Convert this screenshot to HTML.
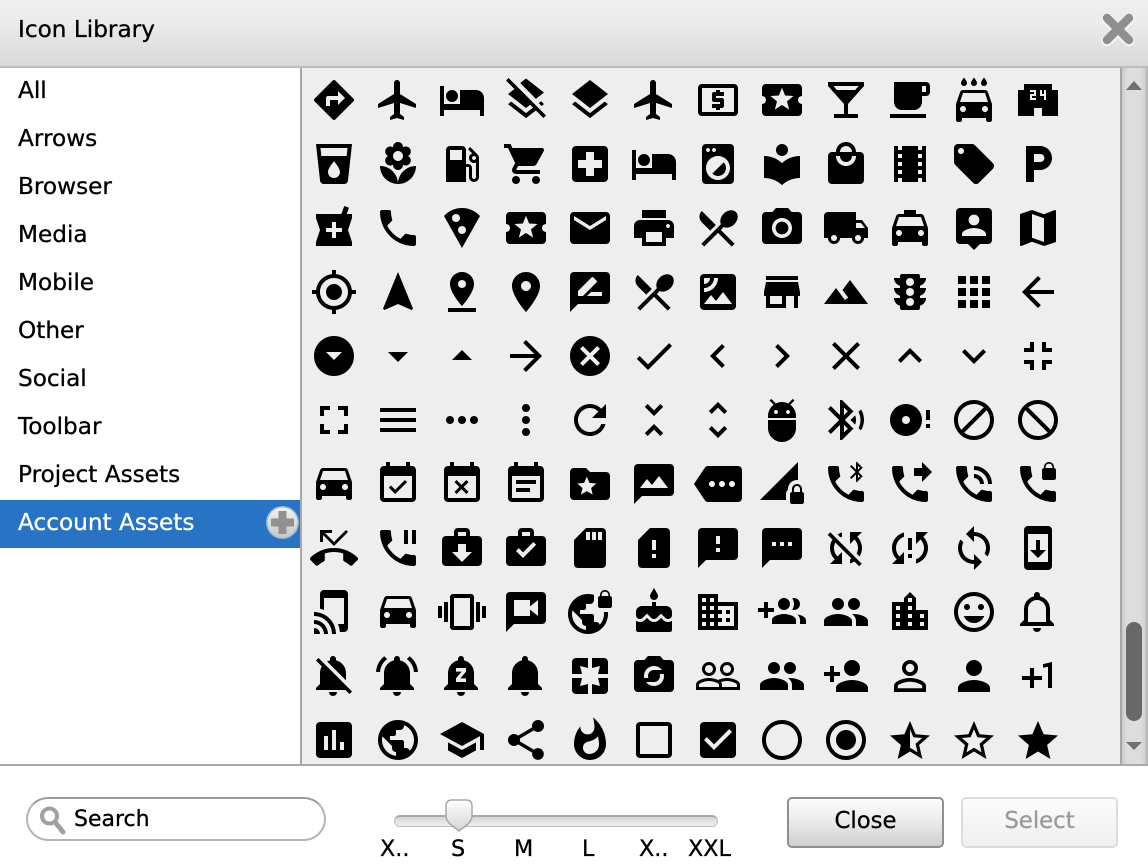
<!DOCTYPE html>
<html lang="en">
<head>
<meta charset="utf-8">
<title>Icon Library</title>
<style>
html,body{margin:0;padding:0;background:#fff}
body{position:relative;width:1148px;height:866px;overflow:hidden;font-family:"DejaVu Sans","Liberation Sans",sans-serif;color:#000}
div,span,button{position:absolute;box-sizing:border-box}
.titlebar{left:0;top:0;width:1148px;height:68px;background:linear-gradient(#eeeeee 0,#ececec 30%,#d9d9d9 100%);border-bottom:2px solid #bcbcbc}
.title{left:18px;top:16px;font-size:23.2px;line-height:28px;white-space:nowrap;-webkit-text-stroke:.3px #000}
.list{left:0;top:68px;width:302px;height:698px;background:#fff;border-right:2px solid #a8a8a8}
.item{left:0;width:300px;height:48px;line-height:48px;padding-left:18px;font-size:23.2px;white-space:nowrap;-webkit-text-stroke:.3px #000}
.sel{background:#2873c4;color:#fff;-webkit-text-stroke:.3px #fff}
.panel{left:302px;top:68px;width:818px;height:696px;background:#eeeeee}
.sbar{left:1120px;top:68px;width:28px;height:696px;background:linear-gradient(90deg,#a6a6a6 0,#a6a6a6 2px,#c8c8c8 2px,#d6d6d6 5px,#dddddd 8px,#dddddd 20px,#d2d2d2 25px,#bcbcbc 26px,#bcbcbc 28px)}
.thumb{left:1126px;top:622px;width:16px;height:99px;border-radius:8px;background:#686868}
.hr{left:0;top:764px;width:1148px;height:2px;background:#a8a8a8}
.search{left:26px;top:797px;width:300px;height:44px;border-radius:22px;border:2px solid #b4b4b4;border-top-color:#9c9c9c;background:#fff}
.stext{left:74px;top:806px;font-size:22px;line-height:28px;-webkit-text-stroke:.3px #000}
.track{left:394px;top:815px;width:324px;height:12px;border-radius:6px;border:1px solid #c0c0c0;border-top:2px solid #a8a8a8;background:linear-gradient(#d4d4d4,#f1f1f1)}
.lab{top:836px;font-size:22.3px;line-height:26px;white-space:nowrap;-webkit-text-stroke:.3px #000}
.btn{top:797px;width:157px;height:51px;border-radius:5px;font-family:inherit;font-size:22.8px;padding:0 0 4px;line-height:44px;text-align:center}
.close{left:787px;border:2px solid #8f8f8f;background:linear-gradient(#fdfdfd 0,#ececec 45%,#cfcfcf 100%);color:#000;-webkit-text-stroke:.3px #000}
.select{left:961px;border:2px solid #dcdcdc;background:linear-gradient(#fcfcfc,#efefef);color:#9a9a9a;-webkit-text-stroke:.3px #9a9a9a}
svg{position:absolute;left:0;top:0}
</style>
</head>
<body>
<div class="titlebar"></div>
<div class="title">Icon Library</div>
<div class="list"></div>
<div class="item" style="top:67px">All</div>
<div class="item" style="top:115px">Arrows</div>
<div class="item" style="top:163px">Browser</div>
<div class="item" style="top:211px">Media</div>
<div class="item" style="top:259px">Mobile</div>
<div class="item" style="top:307px">Other</div>
<div class="item" style="top:355px">Social</div>
<div class="item" style="top:403px">Toolbar</div>
<div class="item" style="top:451px">Project Assets</div>
<div class="item sel" style="top:500px;line-height:46px">Account Assets</div>
<div class="panel"></div>
<div class="sbar"></div>
<div class="thumb"></div>
<div class="hr"></div>
<div class="search"></div>
<div class="stext">Search</div>
<div class="track"></div>
<div class="lab" style="left:380px">X..</div>
<div class="lab" style="left:451px">S</div>
<div class="lab" style="left:514px">M</div>
<div class="lab" style="left:582px">L</div>
<div class="lab" style="left:639px">X..</div>
<div class="lab" style="left:688px">XXL</div>
<button class="btn close">Close</button>
<button class="btn select">Select</button>
<svg width="1148" height="866" viewBox="0 0 1148 866" xmlns="http://www.w3.org/2000/svg">
<defs>
<linearGradient id="pg" x1="0" y1="0" x2="0" y2="1"><stop offset="0" stop-color="#f2f2f2"/><stop offset="1" stop-color="#c8c8c8"/></linearGradient>
<linearGradient id="tg" x1="0" y1="0" x2="0" y2="1"><stop offset="0" stop-color="#ffffff"/><stop offset="1" stop-color="#d4d4d4"/></linearGradient>
<path id="flight" d="M21 16v-2l-8-5V3.5c0-.83-.67-1.5-1.5-1.5S10 2.67 10 3.5V9l-8 5v2l8-2.5V19l-2 1.5V22l3.5-1 3.5 1v-1.5L13 19v-5.5l8 2.5z"/>
<path id="hotel" d="M7 13c1.66 0 3-1.34 3-3S8.66 7 7 7s-3 1.34-3 3 1.34 3 3 3zm12-6h-8v7H3V5H1v15h2v-3h18v3h2v-9c0-2.21-1.79-4-4-4z"/>
<path id="ticket" d="M20 12c0-1.1.9-2 2-2V6c0-1.1-.9-2-2-2H4c-1.1 0-1.99.9-1.99 2v4c1.1 0 1.99.9 1.99 2s-.89 2-2 2v4c0 1.1.9 2 2 2h16c1.1 0 2-.9 2-2v-4c-1.1 0-2-.9-2-2zm-4.42 4.8L12 14.5l-3.58 2.3 1.08-4.12-3.29-2.69 4.24-.25L12 5.8l1.54 3.95 4.24.25-3.29 2.69 1.09 4.11z"/>
<path id="rest" d="M8.1 13.34l2.83-2.83L3.91 3.5c-1.56 1.56-1.56 4.09 0 5.66l4.19 4.18zm6.78-1.81c1.53.71 3.68.21 5.27-1.38 1.91-1.91 2.28-4.65.81-6.12-1.46-1.46-4.2-1.1-6.12.81-1.59 1.59-2.09 3.74-1.38 5.27L3.7 19.87l1.41 1.41L12 14.41l6.88 6.88 1.41-1.41L13.41 13l1.47-1.47z"/>
<path id="car" d="M18.92 5.01C18.72 4.42 18.16 4 17.5 4h-11c-.66 0-1.21.42-1.42 1.01L3 11v8c0 .55.45 1 1 1h1c.55 0 1-.45 1-1v-1h12v1c0 .55.45 1 1 1h1c.55 0 1-.45 1-1v-8l-2.08-5.99zM6.5 15c-.83 0-1.5-.67-1.5-1.5S5.67 12 6.5 12s1.5.67 1.5 1.5S7.33 15 6.5 15zm11 0c-.83 0-1.5-.67-1.5-1.5s.67-1.5 1.5-1.5 1.5.67 1.5 1.5-.67 1.5-1.5 1.5zM5 10l1.5-4.5h11L19 10H5z"/>
<path id="group" d="M16 11c1.66 0 2.99-1.34 2.99-3S17.66 5 16 5c-1.66 0-3 1.34-3 3s1.34 3 3 3zm-8 0c1.66 0 2.99-1.34 2.99-3S9.66 5 8 5C6.34 5 5 6.34 5 8s1.34 3 3 3zm0 2c-2.33 0-7 1.17-7 3.5V19h14v-2.5c0-2.33-4.67-3.5-7-3.5zm8 0c-.29 0-.62.02-.97.05 1.16.84 1.97 1.97 1.97 3.45V19h6v-2.5c0-2.33-4.67-3.5-7-3.5z"/>
</defs>

<!-- close X -->
<path d="M1107 19L1129 41M1129 19L1107 41" stroke="#ffffff" stroke-opacity=".6" stroke-width="11" stroke-linecap="round"/>
<path d="M1107 19L1129 41M1129 19L1107 41" stroke="#8f8f8f" stroke-width="8.5" stroke-linecap="round" transform="translate(0 -1)"/>
<!-- add circle -->
<circle cx="282.5" cy="522.5" r="16.5" fill="#e6e6e6" fill-opacity=".6"/>
<circle cx="282.5" cy="522.5" r="15" fill="url(#pg)"/>
<path d="M271 522.5h23M282.5 511v23" stroke="#919191" stroke-width="8"/>
<!-- scrollbar arrows -->
<path d="M1126 90L1134 81L1142 90Z" fill="#707070"/>
<path d="M1126 742L1134 750L1142 742Z" fill="#707070"/>
<!-- search icon -->
<circle cx="49.5" cy="816" r="7.5" fill="none" stroke="#a0a0a0" stroke-width="4"/>
<path d="M55 822L63 832" stroke="#a0a0a0" stroke-width="5" stroke-linecap="round"/>
<!-- slider thumb -->
<path d="M452 800H466Q472 800 472 806V816Q472 820 468 824L459 831L450 824Q446 820 446 816V806Q446 800 452 800Z" fill="url(#tg)" stroke="#a8a8a8" stroke-width="1.5"/>

<g fill="#000">
<!-- row 1 -->
<path transform="translate(310 76) scale(2)" d="M21.71 11.29l-9-9c-.39-.39-1.02-.39-1.41 0l-9 9c-.39.39-.39 1.02 0 1.41l9 9c.39.39 1.02.39 1.41 0l9-9c.39-.38.39-1.01 0-1.41zM14 14.5V12h-4v3H8v-4c0-.55.45-1 1-1h5V7.5l3.5 3.5-3.5 3.5z"/>
<use href="#flight" transform="translate(374 76) scale(2)"/>
<use href="#hotel" transform="translate(438 76) scale(2)"/>
<path transform="translate(502 76) scale(2)" d="M19.81 14.99l1.19-.92-1.43-1.43-1.19.92 1.43 1.43zm-.45-5.45L21 8.27 12 1.27 9.09 3.53l7.87 7.88 2.4-1.87zM3.27 1L2 2.27l4.22 4.22L3 9l1.63 1.27L12 16l2.1-1.63 1.43 1.43L12 18.54l-7.37-5.73L3 14.07l9 7 4.95-3.85L20.73 21 22 19.73 3.27 1z"/>
<path transform="translate(566 76) scale(2)" d="M11.99 18.54l-7.37-5.73L3 14.07l9 7 9-7-1.63-1.27-7.38 5.74zM12 16l7.36-5.73L21 9l-9-7-9 7 1.63 1.27L12 16z"/>
<use href="#flight" transform="translate(630 76) scale(2)"/>
<path transform="translate(694 76) scale(2)" d="M11 17h2v-1h1c.55 0 1-.45 1-1v-3c0-.55-.45-1-1-1h-3v-1h4V8h-2V7h-2v1h-1c-.55 0-1 .45-1 1v3c0 .55.45 1 1 1h3v1H9v2h2v1zm9-13H4c-1.11 0-1.99.89-1.99 2L2 18c0 1.11.89 2 2 2h16c1.11 0 2-.89 2-2V6c0-1.11-.89-2-2-2zm0 14H4V6h16v12z"/>
<use href="#ticket" transform="translate(758 76) scale(2)"/>
<path transform="translate(822 76) scale(2)" d="M21 5V3H3v2l8 9v5H6v2h12v-2h-5v-5l8-9zM7.43 7L5.66 5h12.69l-1.78 2H7.43z"/>
<path transform="translate(886 76) scale(2)" d="M20 3H4v10c0 2.21 1.79 4 4 4h6c2.21 0 4-1.79 4-4v-3h2c1.11 0 2-.89 2-2V5c0-1.11-.89-2-2-2zm0 5h-2V5h2v3zM2 21h18v-2H2v2z"/>
<path transform="translate(950 76) scale(2)" d="M17 5c.83 0 1.5-.67 1.5-1.5 0-1-1.5-2.7-1.5-2.7s-1.5 1.7-1.5 2.7c0 .83.67 1.5 1.5 1.5zm-5 0c.83 0 1.5-.67 1.5-1.5 0-1-1.5-2.7-1.5-2.7s-1.5 1.7-1.5 2.7c0 .83.67 1.5 1.5 1.5zM7 5c.83 0 1.5-.67 1.5-1.5C8.5 2.5 7 .8 7 .8S5.5 2.5 5.5 3.5C5.5 4.33 6.17 5 7 5zm11.92 3.01C18.72 7.42 18.16 7 17.5 7h-11c-.66 0-1.21.42-1.42 1.01L3 14v8c0 .55.45 1 1 1h1c.55 0 1-.45 1-1v-1h12v1c0 .55.45 1 1 1h1c.55 0 1-.45 1-1v-8l-2.08-5.99zM6.5 18c-.83 0-1.5-.67-1.5-1.5S5.67 15 6.5 15s1.5.67 1.5 1.5S7.33 18 6.5 18zm11 0c-.83 0-1.5-.67-1.5-1.5s.67-1.5 1.5-1.5 1.5.67 1.5 1.5-.67 1.5-1.5 1.5zM5 13l1.5-4.5h11L19 13H5z"/>
<path transform="translate(1014 76) scale(2)" d="M19 7V4H5v3H2v13h8v-4h4v4h8V7h-3zm-8 3H9v1h2v1H8V9h2V8H8V7h3v3zm5 2h-1v-2h-2V7h1v2h1V7h1v5z"/>
<!-- row 2 -->
<path transform="translate(310 140) scale(2)" d="M3 2l2.01 18.23C5.13 21.23 5.97 22 7 22h10c1.03 0 1.87-.77 1.99-1.77L21 2H3zm9 17c-1.66 0-3-1.34-3-3 0-2 3-5.4 3-5.4s3 3.4 3 5.4c0 1.66-1.34 3-3 3zm6.33-11H5.67l-.44-4h13.53l-.43 4z"/>
<path transform="translate(374 140) scale(2)" d="M12 22c4.97 0 9-4.03 9-9-4.97 0-9 4.03-9 9zM5.6 10.25c0 1.38 1.12 2.5 2.5 2.5.53 0 1.01-.16 1.42-.44l-.02.19c0 1.38 1.12 2.5 2.5 2.5s2.5-1.12 2.5-2.5l-.02-.19c.4.28.89.44 1.42.44 1.38 0 2.5-1.12 2.5-2.5 0-1-.59-1.85-1.43-2.25.84-.4 1.43-1.25 1.43-2.25 0-1.38-1.12-2.5-2.5-2.5-.53 0-1.01.16-1.42.44l.02-.19C14.5 2.12 13.38 1 12 1S9.5 2.12 9.5 3.5l.02.19c-.4-.28-.89-.44-1.42-.44-1.38 0-2.5 1.12-2.5 2.5 0 1 .59 1.85 1.43 2.25-.84.4-1.43 1.25-1.43 2.25zM12 5.5c1.38 0 2.5 1.12 2.5 2.5s-1.12 2.5-2.5 2.5S9.5 9.38 9.5 8s1.12-2.5 2.5-2.5zM3 13c0 4.97 4.03 9 9 9 0-4.97-4.03-9-9-9z"/>
<path transform="translate(438 140) scale(2)" d="M19.77 7.23l.01-.01-3.72-3.72L15 4.56l2.11 2.11c-.94.36-1.61 1.26-1.61 2.33 0 1.38 1.12 2.5 2.5 2.5.36 0 .69-.08 1-.21v7.21c0 .55-.45 1-1 1s-1-.45-1-1V14c0-1.1-.9-2-2-2h-1V5c0-1.1-.9-2-2-2H6c-1.1 0-2 .9-2 2v16h10v-7.5h1.5v5c0 1.38 1.12 2.5 2.5 2.5s2.5-1.12 2.5-2.5V9c0-.69-.28-1.32-.73-1.77zM12 10H6V5h6v5zm6 0c-.55 0-1-.45-1-1s.45-1 1-1 1 .45 1 1-.45 1-1 1z"/>
<path transform="translate(502 140) scale(2)" d="M7 18c-1.1 0-1.99.9-1.99 2S5.9 22 7 22s2-.9 2-2-.9-2-2-2zM1 2v2h2l3.6 7.59-1.35 2.45c-.16.28-.25.61-.25.96 0 1.1.9 2 2 2h12v-2H7.42c-.14 0-.25-.11-.25-.25l.03-.12.9-1.63h7.45c.75 0 1.41-.41 1.75-1.03l3.58-6.49c.08-.14.12-.31.12-.48 0-.55-.45-1-1-1H5.21l-.94-2H1zm16 16c-1.1 0-1.99.9-1.99 2s.89 2 1.99 2 2-.9 2-2-.9-2-2-2z"/>
<path transform="translate(566 140) scale(2)" d="M19 3H5c-1.1 0-1.99.9-1.99 2L3 19c0 1.1.9 2 2 2h14c1.1 0 2-.9 2-2V5c0-1.1-.9-2-2-2zm-1 11h-4v4h-4v-4H6v-4h4V6h4v4h4v4z"/>
<use href="#hotel" transform="translate(630 140) scale(2)"/>
<path transform="translate(694 140) scale(2)" d="M9.17 16.83c1.56 1.56 4.1 1.56 5.66 0 1.56-1.56 1.56-4.1 0-5.66l-5.66 5.66zM18 2.01L6 2c-1.11 0-2 .89-2 2v16c0 1.11.89 2 2 2h12c1.11 0 2-.89 2-2V4c0-1.11-.89-1.99-2-1.99zM10 4c.55 0 1 .45 1 1s-.45 1-1 1-1-.45-1-1 .45-1 1-1zM7 4c.55 0 1 .45 1 1s-.45 1-1 1-1-.45-1-1 .45-1 1-1zm5 16c-3.31 0-6-2.69-6-6s2.69-6 6-6 6 2.69 6 6-2.69 6-6 6z"/>
<path transform="translate(758 140) scale(2)" d="M12 11.55C9.64 9.35 6.48 8 3 8v11c3.48 0 6.64 1.35 9 3.55 2.36-2.19 5.52-3.55 9-3.55V8c-3.48 0-6.64 1.35-9 3.55zM12 8c1.66 0 3-1.34 3-3s-1.34-3-3-3-3 1.34-3 3 1.34 3 3 3z"/>
<path transform="translate(822 140) scale(2)" d="M19 6h-2c0-2.76-2.24-5-5-5S7 3.24 7 6H5c-1.1 0-1.99.9-1.99 2L3 20c0 1.1.9 2 2 2h14c1.1 0 2-.9 2-2V8c0-1.1-.9-2-2-2zm-7-3c1.66 0 3 1.34 3 3H9c0-1.66 1.34-3 3-3zm0 10c-2.76 0-5-2.24-5-5h2c0 1.66 1.34 3 3 3s3-1.34 3-3h2c0 2.76-2.24 5-5 5z"/>
<path transform="translate(886 140) scale(2)" d="M18 3v2h-2V3H8v2H6V3H4v18h2v-2h2v2h8v-2h2v2h2V3h-2zM8 17H6v-2h2v2zm0-4H6v-2h2v2zm0-4H6V7h2v2zm10 8h-2v-2h2v2zm0-4h-2v-2h2v2zm0-4h-2V7h2v2z"/>
<path transform="translate(950 140) scale(2)" d="M21.41 11.58l-9-9C12.05 2.22 11.55 2 11 2H4c-1.1 0-2 .9-2 2v7c0 .55.22 1.05.59 1.42l9 9c.36.36.86.58 1.41.58.55 0 1.05-.22 1.41-.59l7-7c.37-.36.59-.86.59-1.41 0-.55-.23-1.06-.59-1.42zM5.5 7C4.67 7 4 6.33 4 5.5S4.67 4 5.5 4 7 4.67 7 5.5 6.33 7 5.5 7z"/>
<path transform="translate(1014 140) scale(2)" d="M13 3H6v18h4v-6h3c3.31 0 6-2.69 6-6s-2.69-6-6-6zm.2 8H10V7h3.2c1.1 0 2 .9 2 2s-.9 2-2 2z"/>
<!-- row 3 -->
<path transform="translate(310 204) scale(2)" d="M21 5h-2.64l1.14-3.14L17.15 1l-1.46 4H3v2l2 6-2 6v2h18v-2l-2-6 2-6V5zm-5 9h-3v3h-2v-3H8v-2h3V9h2v3h3v2z"/>
<path transform="translate(374 204) scale(2)" d="M6.62 10.79c1.44 2.83 3.76 5.14 6.59 6.59l2.2-2.2c.27-.27.67-.36 1.02-.24 1.12.37 2.33.57 3.57.57.55 0 1 .45 1 1V20c0 .55-.45 1-1 1-9.39 0-17-7.61-17-17 0-.55.45-1 1-1h3.5c.55 0 1 .45 1 1 0 1.25.2 2.45.57 3.57.11.35.03.74-.25 1.02l-2.2 2.2z"/>
<path transform="translate(438 204) scale(2)" d="M12 2C8.43 2 5.23 3.54 3.01 6L12 22l8.99-16C18.78 3.55 15.57 2 12 2zM7 7c0-1.1.9-2 2-2s2 .9 2 2-.9 2-2 2-2-.9-2-2zm5 8c-1.1 0-2-.9-2-2s.9-2 2-2 2 .9 2 2-.9 2-2 2z"/>
<use href="#ticket" transform="translate(502 204) scale(2)"/>
<path transform="translate(566 204) scale(2)" d="M20 4H4c-1.1 0-1.99.9-1.99 2L2 18c0 1.1.9 2 2 2h16c1.1 0 2-.9 2-2V6c0-1.1-.9-2-2-2zm0 4l-8 5-8-5V6l8 5 8-5v2z"/>
<path transform="translate(630 204) scale(2)" d="M19 8H5c-1.66 0-3 1.34-3 3v6h4v4h12v-4h4v-6c0-1.66-1.34-3-3-3zm-3 11H8v-5h8v5zm3-7c-.55 0-1-.45-1-1s.45-1 1-1 1 .45 1 1-.45 1-1 1zm-1-9H6v4h12V3z"/>
<use href="#rest" transform="translate(694 204) scale(2)"/>
<path transform="translate(758 204) scale(2)" d="M12 8.8c-1.77 0-3.2 1.43-3.2 3.2s1.43 3.2 3.2 3.2 3.2-1.43 3.2-3.2-1.43-3.2-3.2-3.2zM9 2L7.17 4H4c-1.1 0-2 .9-2 2v12c0 1.1.9 2 2 2h16c1.1 0 2-.9 2-2V6c0-1.1-.9-2-2-2h-3.17L15 2H9zm3 15c-2.76 0-5-2.24-5-5s2.24-5 5-5 5 2.24 5 5-2.24 5-5 5z"/>
<path transform="translate(822 204) scale(2)" d="M20 8h-3V4H3c-1.1 0-2 .9-2 2v11h2c0 1.66 1.34 3 3 3s3-1.34 3-3h6c0 1.66 1.34 3 3 3s3-1.34 3-3h2v-5l-3-4zM6 18.5c-.83 0-1.5-.67-1.5-1.5s.67-1.5 1.5-1.5 1.5.67 1.5 1.5-.67 1.5-1.5 1.5zm13.5-9l1.96 2.5H17V9.5h2.5zm-1.5 9c-.83 0-1.5-.67-1.5-1.5s.67-1.5 1.5-1.5 1.5.67 1.5 1.5-.67 1.5-1.5 1.5z"/>
<path transform="translate(886 204) scale(2)" d="M18.92 6.01C18.72 5.42 18.16 5 17.5 5H15V3H9v2H6.5c-.66 0-1.21.42-1.42 1.01L3 12v8c0 .55.45 1 1 1h1c.55 0 1-.45 1-1v-1h12v1c0 .55.45 1 1 1h1c.55 0 1-.45 1-1v-8l-2.08-5.99zM6.5 16c-.83 0-1.5-.67-1.5-1.5S5.67 13 6.5 13s1.5.67 1.5 1.5S7.33 16 6.5 16zm11 0c-.83 0-1.5-.67-1.5-1.5s.67-1.5 1.5-1.5 1.5.67 1.5 1.5-.67 1.5-1.5 1.5zM5 11l1.5-4.5h11L19 11H5z"/>
<path transform="translate(950 204) scale(2)" d="M19 2H5c-1.11 0-2 .9-2 2v14c0 1.1.89 2 2 2h4l3 3 3-3h4c1.1 0 2-.9 2-2V4c0-1.1-.9-2-2-2zm-7 3.3c1.49 0 2.7 1.21 2.7 2.7 0 1.49-1.21 2.7-2.7 2.7-1.49 0-2.7-1.21-2.7-2.7 0-1.49 1.21-2.7 2.7-2.7zM18 16H6v-.9c0-2 4-3.1 6-3.1s6 1.1 6 3.1v.9z"/>
<path transform="translate(1014 204) scale(2)" d="M20.5 3l-.16.03L15 5.1 9 3 3.36 4.9c-.21.07-.36.25-.36.48V20.5c0 .28.22.5.5.5l.16-.03L9 18.9l6 2.1 5.64-1.9c.21-.07.36-.25.36-.48V3.5c0-.28-.22-.5-.5-.5zM15 19l-6-2.11V5l6 2.11V19z"/>
<!-- row 4 -->
<path transform="translate(310 268) scale(2)" d="M12 8c-2.21 0-4 1.79-4 4s1.79 4 4 4 4-1.79 4-4-1.79-4-4-4zm8.94 3c-.46-4.17-3.77-7.48-7.94-7.94V1h-2v2.06C6.83 3.52 3.52 6.83 3.06 11H1v2h2.06c.46 4.17 3.77 7.48 7.94 7.94V23h2v-2.06c4.17-.46 7.48-3.77 7.94-7.94H23v-2h-2.06zM12 19c-3.87 0-7-3.13-7-7s3.13-7 7-7 7 3.13 7 7-3.13 7-7 7z"/>
<path transform="translate(374 268) scale(2)" d="M12 2L4.5 20.29l.71.71L12 18l6.79 3 .71-.71z"/>
<path transform="translate(438 268) scale(2)" d="M18 8c0-3.31-2.69-6-6-6S6 4.69 6 8c0 4.5 6 11 6 11s6-6.5 6-11zm-8 0c0-1.1.9-2 2-2s2 .9 2 2-.89 2-2 2c-1.1 0-2-.9-2-2zM5 20v2h14v-2H5z"/>
<path transform="translate(502 268) scale(2)" d="M12 2C8.13 2 5 5.13 5 9c0 5.25 7 13 7 13s7-7.75 7-13c0-3.87-3.13-7-7-7zm0 9.5c-1.38 0-2.5-1.12-2.5-2.5s1.12-2.5 2.5-2.5 2.5 1.12 2.5 2.5-1.12 2.5-2.5 2.5z"/>
<path transform="translate(566 268) scale(2)" d="M20 2H4c-1.1 0-1.99.9-1.99 2L2 22l4-4h14c1.1 0 2-.9 2-2V4c0-1.1-.9-2-2-2zM6 14v-2.47l6.88-6.88c.2-.2.51-.2.71 0l1.77 1.77c.2.2.2.51 0 .71L8.47 14H6zm12 0h-7.5l2-2H18v2z"/>
<use href="#rest" transform="translate(630 268) scale(2)"/>
<path transform="translate(694 268) scale(2)" d="M19 3H5c-1.1 0-2 .9-2 2v14c0 1.1.9 2 2 2h14c1.1 0 2-.9 2-2V5c0-1.1-.9-2-2-2zM5 4.99h3C8 6.65 6.66 8 5 8V4.99zM5 12v-2c2.76 0 5-2.25 5-5.01h2C12 8.86 8.87 12 5 12zm0 6l3.5-4.5 2.5 3.01L14.5 12l4.5 6H5z"/>
<path transform="translate(758 268) scale(2)" d="M20 4H4v2h16V4zm1 10v-2l-1-5H4l-1 5v2h1v6h10v-6h4v6h2v-6h1zm-9 4H6v-4h6v4z"/>
<path transform="translate(822 268) scale(2)" d="M14 6l-3.75 5 2.85 3.8-1.6 1.2C9.81 13.75 7 10 7 10l-6 8h22L14 6z"/>
<path transform="translate(886 268) scale(2)" d="M20 10h-3V8.86c1.72-.45 3-2 3-3.86h-3V4c0-.55-.45-1-1-1H8c-.55 0-1 .45-1 1v1H4c0 1.86 1.28 3.41 3 3.86V10H4c0 1.86 1.28 3.41 3 3.86V15H4c0 1.86 1.28 3.41 3 3.86V20c0 .55.45 1 1 1h8c.55 0 1-.45 1-1v-1.14c1.72-.45 3-2 3-3.86h-3v-1.14c1.72-.45 3-2 3-3.86zm-8 9c-1.11 0-2-.9-2-2s.89-2 2-2c1.1 0 2 .9 2 2s-.89 2-2 2zm0-5c-1.11 0-2-.9-2-2s.89-2 2-2c1.1 0 2 .9 2 2s-.89 2-2 2zm0-5c-1.11 0-2-.9-2-2 0-1.11.89-2 2-2 1.1 0 2 .89 2 2 0 1.1-.89 2-2 2z"/>
<path transform="translate(950 268) scale(2)" d="M4 8h4V4H4v4zm6 12h4v-4h-4v4zm-6 0h4v-4H4v4zm0-6h4v-4H4v4zm6 0h4v-4h-4v4zm6-10v4h4V4h-4zm-6 4h4V4h-4v4zm6 6h4v-4h-4v4zm0 6h4v-4h-4v4z"/>
<path transform="translate(1014 268) scale(2)" d="M20 11H7.83l5.59-5.59L12 4l-8 8 8 8 1.41-1.41L7.83 13H20v-2z"/>
<!-- row 5 -->
<path transform="translate(310 332) scale(2)" d="M12 2C6.48 2 2 6.48 2 12s4.48 10 10 10 10-4.48 10-10S17.52 2 12 2zm0 12l-4-4h8l-4 4z"/>
<path transform="translate(374 332) scale(2)" d="M7 10l5 5 5-5z"/>
<path transform="translate(438 332) scale(2)" d="M7 14l5-5 5 5z"/>
<path transform="translate(502 332) scale(2)" d="M12 4l-1.41 1.41L16.17 11H4v2h12.17l-5.58 5.59L12 20l8-8z"/>
<path transform="translate(566 332) scale(2)" d="M12 2C6.47 2 2 6.47 2 12s4.47 10 10 10 10-4.47 10-10S17.53 2 12 2zm5 13.59L15.59 17 12 13.41 8.41 17 7 15.59 10.59 12 7 8.41 8.41 7 12 10.59 15.59 7 17 8.41 13.41 12 17 15.59z"/>
<path transform="translate(630 332) scale(2)" d="M9 16.17L4.83 12l-1.42 1.41L9 19 21 7l-1.41-1.41z"/>
<path transform="translate(694 332) scale(2)" d="M15.41 7.41L14 6l-6 6 6 6 1.41-1.41L10.83 12z"/>
<path transform="translate(758 332) scale(2)" d="M10 6L8.59 7.41 13.17 12l-4.58 4.59L10 18l6-6z"/>
<path transform="translate(822 332) scale(2)" d="M19 6.41L17.59 5 12 10.59 6.41 5 5 6.41 10.59 12 5 17.59 6.41 19 12 13.41 17.59 19 19 17.59 13.41 12z"/>
<path transform="translate(886 332) scale(2)" d="M12 8l-6 6 1.41 1.41L12 10.83l4.59 4.58L18 14z"/>
<path transform="translate(950 332) scale(2)" d="M16.59 8.59L12 13.17 7.41 8.59 6 10l6 6 6-6z"/>
<path transform="translate(1014 332) scale(2)" d="M5 16h3v3h2v-5H5v2zm3-8H5v2h5V5H8v3zm6 11h2v-3h3v-2h-5v5zm2-11V5h-2v5h5V8h-3z"/>
<!-- row 6 -->
<path transform="translate(310 396) scale(2)" d="M7 14H5v5h5v-2H7v-3zm-2-4h2V7h3V5H5v5zm12 7h-3v2h5v-5h-2v3zM14 5v2h3v3h2V5h-5z"/>
<path transform="translate(374 396) scale(2)" d="M3 18h18v-2H3v2zm0-5h18v-2H3v2zm0-7v2h18V6H3z"/>
<path transform="translate(438 396) scale(2)" d="M6 10c-1.1 0-2 .9-2 2s.9 2 2 2 2-.9 2-2-.9-2-2-2zm12 0c-1.1 0-2 .9-2 2s.9 2 2 2 2-.9 2-2-.9-2-2-2zm-6 0c-1.1 0-2 .9-2 2s.9 2 2 2 2-.9 2-2-.9-2-2-2z"/>
<path transform="translate(502 396) scale(2)" d="M12 8c1.1 0 2-.9 2-2s-.9-2-2-2-2 .9-2 2 .9 2 2 2zm0 2c-1.1 0-2 .9-2 2s.9 2 2 2 2-.9 2-2-.9-2-2-2zm0 6c-1.1 0-2 .9-2 2s.9 2 2 2 2-.9 2-2-.9-2-2-2z"/>
<path transform="translate(566 396) scale(2)" d="M17.65 6.35C16.2 4.9 14.21 4 12 4c-4.42 0-7.99 3.58-7.99 8s3.57 8 7.99 8c3.73 0 6.84-2.55 7.73-6h-2.08c-.82 2.33-3.04 4-5.65 4-3.31 0-6-2.69-6-6s2.69-6 6-6c1.66 0 3.14.69 4.22 1.78L13 11h7V4l-2.35 2.35z"/>
<path transform="translate(630 396) scale(2)" d="M7.41 18.59L8.83 20 12 16.83 15.17 20l1.41-1.41L12 14l-4.59 4.59zm9.18-13.18L15.17 4 12 7.17 8.83 4 7.41 5.41 12 10l4.59-4.59z"/>
<path transform="translate(694 396) scale(2)" d="M12 5.83L15.17 9l1.41-1.41L12 3 7.41 7.59 8.83 9 12 5.83zm0 12.34L8.83 15l-1.41 1.41L12 21l4.59-4.59L15.17 15 12 18.17z"/>
<path transform="translate(758 396) scale(2)" d="M5 16c0 3.87 3.13 7 7 7s7-3.13 7-7v-4H5v4zM16.12 4.37l2.1-2.1-.82-.83-2.3 2.31C14.16 3.28 13.12 3 12 3s-2.16.28-3.09.75L6.6 1.44l-.82.83 2.1 2.1C6.14 5.64 5 7.68 5 10v1h14v-1c0-2.32-1.14-4.36-2.88-5.63zM9 9c-.55 0-1-.45-1-1s.45-1 1-1 1 .45 1 1-.45 1-1 1zm6 0c-.55 0-1-.45-1-1s.45-1 1-1 1 .45 1 1-.45 1-1 1z"/>
<path transform="translate(822 396) scale(2)" d="M14.24 12.01l2.32 2.32c.28-.72.44-1.51.44-2.33 0-.82-.16-1.59-.43-2.31l-2.33 2.32zm5.29-5.3l-1.26 1.26c.63 1.21.98 2.57.98 4.02s-.36 2.82-.98 4.02l1.2 1.2c.97-1.54 1.54-3.36 1.54-5.31-.01-1.89-.55-3.67-1.48-5.19zm-3.82 1L10 2H9v7.59L4.41 5 3 6.41 8.59 12 3 17.59 4.41 19 9 14.41V22h1l5.71-5.71-4.3-4.29 4.3-4.29zM11 5.83l1.88 1.88L11 9.59V5.83zm1.88 10.46L11 18.17v-3.76l1.88 1.88z"/>
<path transform="translate(886 396) scale(2)" d="M20 16h2v-2h-2v2zm0-9v5h2V7h-2zM10 4c-4.42 0-8 3.58-8 8s3.58 8 8 8 8-3.58 8-8-3.58-8-8-8zm0 10c-1.1 0-2-.9-2-2s.9-2 2-2 2 .9 2 2-.9 2-2 2z"/>
<path transform="translate(950 396) scale(2)" d="M12 2C6.48 2 2 6.48 2 12s4.48 10 10 10 10-4.48 10-10S17.52 2 12 2zM4 12c0-4.42 3.58-8 8-8 1.85 0 3.55.63 4.9 1.69L5.69 16.9C4.63 15.55 4 13.85 4 12zm8 8c-1.85 0-3.55-.63-4.9-1.69L18.31 7.1C19.37 8.45 20 10.15 20 12c0 4.42-3.58 8-8 8z"/>
<path transform="translate(1014 396) scale(2)" d="M12 2C6.48 2 2 6.48 2 12s4.48 10 10 10 10-4.48 10-10S17.52 2 12 2zm0 18c-4.42 0-8-3.58-8-8 0-1.85.63-3.55 1.69-4.9L16.9 18.31C15.55 19.37 13.85 20 12 20zm6.31-3.1L7.1 5.69C8.45 4.63 10.15 4 12 4c4.42 0 8 3.58 8 8 0 1.85-.63 3.55-1.69 4.9z"/>
<!-- row 7 -->
<use href="#car" transform="translate(310 460) scale(2)"/>
<path transform="translate(374 460) scale(2)" d="M16.53 11.06L15.47 10l-4.88 4.88-2.12-2.12-1.06 1.06L10.59 17l5.94-5.94zM19 3h-1V1h-2v2H8V1H6v2H5c-1.11 0-1.99.9-1.99 2L3 19c0 1.1.89 2 2 2h14c1.1 0 2-.9 2-2V5c0-1.1-.9-2-2-2zm0 16H5V8h14v11z"/>
<path transform="translate(438 460) scale(2)" d="M9.31 17l2.44-2.44L14.19 17l1.06-1.06-2.44-2.44 2.44-2.44L14.19 10l-2.44 2.44L9.31 10l-1.06 1.06 2.44 2.44-2.44 2.44L9.31 17zM19 3h-1V1h-2v2H8V1H6v2H5c-1.11 0-1.99.9-1.99 2L3 19c0 1.1.89 2 2 2h14c1.1 0 2-.9 2-2V5c0-1.1-.9-2-2-2zm0 16H5V8h14v11z"/>
<path transform="translate(502 460) scale(2)" d="M17 10H7v2h10v-2zm2-7h-1V1h-2v2H8V1H6v2H5c-1.11 0-1.99.9-1.99 2L3 19c0 1.1.89 2 2 2h14c1.1 0 2-.9 2-2V5c0-1.1-.9-2-2-2zm0 16H5V8h14v11zm-5-5H7v2h7v-2z"/>
<path transform="translate(566 460) scale(2)" d="M20 6h-8l-2-2H4c-1.1 0-1.99.9-1.99 2L2 18c0 1.1.9 2 2 2h16c1.1 0 2-.9 2-2V8c0-1.1-.9-2-2-2zm-6.66 11.3L10.4 15.58 7.46 17.3l.78-3.33-2.59-2.24 3.41-.29L10.4 8.3l1.34 3.14 3.41.29-2.59 2.24.78 3.33z"/>
<path transform="translate(630 460) scale(2)" d="M20 2H4c-1.1 0-1.99.9-1.99 2L2 22l4-4h14c1.1 0 2-.9 2-2V4c0-1.1-.9-2-2-2zM5 14l3.5-4.5 2.5 3.01L14.5 8l4.5 6H5z"/>
<path transform="translate(694 460) scale(2)" d="M22 3H7c-.69 0-1.23.35-1.59.88L0 12l5.41 8.11c.36.53.9.89 1.59.89h15c1.1 0 2-.9 2-2V5c0-1.1-.9-2-2-2zM9 13.5c-.83 0-1.5-.67-1.5-1.5s.67-1.5 1.5-1.5 1.5.67 1.5 1.5-.67 1.5-1.5 1.5zm5 0c-.83 0-1.5-.67-1.5-1.5s.67-1.5 1.5-1.5 1.5.67 1.5 1.5-.67 1.5-1.5 1.5zm5 0c-.83 0-1.5-.67-1.5-1.5s.67-1.5 1.5-1.5 1.5.67 1.5 1.5-.67 1.5-1.5 1.5z"/>
<path transform="translate(758 460) scale(2)" d="M19.5 10c.17 0 .33.03.5.05V1L1 20h13v-3c0-.89.39-1.68 1-2.23v-.27c0-2.48 2.02-4.5 4.5-4.5zm2.5 6v-1.5c0-1.38-1.12-2.5-2.5-2.5S17 13.12 17 14.5V16c-.55 0-1 .45-1 1v4c0 .55.45 1 1 1h5c.55 0 1-.45 1-1v-4c0-.55-.45-1-1-1zm-1 0h-3v-1.5c0-.83.67-1.5 1.5-1.5s1.5.67 1.5 1.5V16z"/>
<path transform="translate(822 460) scale(2)" d="M14.71 9.5L17 7.21V11h.5l2.85-2.85L18.21 6l2.15-2.15L17.5 1H17v3.79L14.71 2.5l-.71.71L16.79 6 14 8.79l.71.71zM18 2.91l.94.94-.94.94V2.91zm0 4.3l.94.94-.94.94V7.21zM20 15.5c-1.25 0-2.45-.2-3.57-.57-.35-.11-.74-.03-1.02.24l-2.2 2.2c-2.83-1.44-5.15-3.75-6.59-6.59l2.2-2.21c.28-.26.36-.65.25-1C8.7 6.45 8.5 5.25 8.5 4c0-.55-.45-1-1-1H4c-.55 0-1 .45-1 1 0 9.39 7.61 17 17 17 .55 0 1-.45 1-1v-3.5c0-.55-.45-1-1-1z"/>
<path transform="translate(886 460) scale(2)" d="M18 11l5-5-5-5v3h-4v4h4v3zm2 4.5c-1.25 0-2.45-.2-3.57-.57-.35-.11-.74-.03-1.02.24l-2.2 2.2c-2.83-1.44-5.15-3.75-6.59-6.59l2.2-2.21c.28-.26.36-.65.25-1C8.7 6.45 8.5 5.25 8.5 4c0-.55-.45-1-1-1H4c-.55 0-1 .45-1 1 0 9.39 7.61 17 17 17 .55 0 1-.45 1-1v-3.5c0-.55-.45-1-1-1z"/>
<path transform="translate(950 460) scale(2)" d="M20 15.5c-1.25 0-2.45-.2-3.57-.57-.35-.11-.74-.03-1.02.24l-2.2 2.2c-2.83-1.44-5.15-3.75-6.59-6.59l2.2-2.21c.28-.26.36-.65.25-1C8.7 6.45 8.5 5.25 8.5 4c0-.55-.45-1-1-1H4c-.55 0-1 .45-1 1 0 9.39 7.61 17 17 17 .55 0 1-.45 1-1v-3.5c0-.55-.45-1-1-1zM19 12h2c0-4.97-4.03-9-9-9v2c3.87 0 7 3.13 7 7zm-4 0h2c0-2.76-2.24-5-5-5v2c1.66 0 3 1.34 3 3z"/>
<path transform="translate(1014 460) scale(2)" d="M20 15.5c-1.25 0-2.45-.2-3.57-.57-.35-.11-.74-.03-1.02.24l-2.2 2.2c-2.83-1.44-5.15-3.75-6.59-6.59l2.2-2.21c.28-.26.36-.65.25-1C8.7 6.45 8.5 5.25 8.5 4c0-.55-.45-1-1-1H4c-.55 0-1 .45-1 1 0 9.39 7.61 17 17 17 .55 0 1-.45 1-1v-3.5c0-.55-.45-1-1-1zM20 4v-.5C20 2.12 18.88 1 17.5 1S15 2.12 15 3.5V4c-.55 0-1 .45-1 1v4c0 .55.45 1 1 1h5c.55 0 1-.45 1-1V5c0-.55-.45-1-1-1zm-.8 0h-3.4v-.5c0-.94.76-1.7 1.7-1.7s1.7.76 1.7 1.7V4z"/>
<!-- row 8 -->
<path transform="translate(310 524) scale(2)" d="M6.5 5.5L12 11l7-7-1-1-6 6-4.5-4.5H11V3H5v6h1.5V5.5zm17.21 11.17C20.66 13.78 16.54 12 12 12 7.46 12 3.34 13.78.29 16.67c-.18.18-.29.43-.29.71s.11.53.29.71l2.48 2.48c.18.18.43.29.71.29.27 0 .52-.11.7-.28.79-.74 1.69-1.36 2.66-1.85.33-.16.56-.5.56-.9v-3.1c1.45-.48 3-.73 4.6-.73 1.6 0 3.15.25 4.6.72v3.1c0 .39.23.74.56.9.98.49 1.87 1.12 2.67 1.85.18.18.43.28.7.28.28 0 .53-.11.71-.29l2.48-2.48c.18-.18.29-.43.29-.71s-.12-.52-.3-.7z"/>
<path transform="translate(374 524) scale(2)" d="M17 3h-2v7h2V3zm3 12.5c-1.25 0-2.45-.2-3.57-.57-.35-.11-.74-.03-1.02.24l-2.2 2.2c-2.83-1.44-5.15-3.75-6.59-6.59l2.2-2.21c.28-.26.36-.65.25-1C8.7 6.45 8.5 5.25 8.5 4c0-.55-.45-1-1-1H4c-.55 0-1 .45-1 1 0 9.39 7.61 17 17 17 .55 0 1-.45 1-1v-3.5c0-.55-.45-1-1-1zM19 3v7h2V3h-2z"/>
<path transform="translate(438 524) scale(2)" d="M20 6h-4V4c0-1.1-.9-2-2-2h-4c-1.1 0-2 .9-2 2v2H4c-1.1 0-1.99.9-1.99 2L2 19c0 1.1.9 2 2 2h16c1.1 0 2-.9 2-2V8c0-1.1-.9-2-2-2zm-10-2h4v2h-4V4zm2 15l-5-5h3v-4h4v4h3l-5 5z"/>
<path transform="translate(502 524) scale(2)" d="M20 6h-4V4c0-1.1-.9-2-2-2h-4c-1.1 0-2 .9-2 2v2H4c-1.1 0-1.99.9-1.99 2L2 19c0 1.1.9 2 2 2h16c1.1 0 2-.9 2-2V8c0-1.1-.9-2-2-2zm-10-2h4v2h-4V4zm.5 13L7 13.5l1.41-1.41 2.09 2.08 5.18-5.18 1.41 1.41-6.59 6.6z"/>
<path transform="translate(566 524) scale(2)" d="M18 2h-8L4.02 8 4 20c0 1.1.9 2 2 2h12c1.1 0 2-.9 2-2V4c0-1.1-.9-2-2-2zm-6 6h-2V4h2v4zm3 0h-2V4h2v4zm3 0h-2V4h2v4z"/>
<path transform="translate(630 524) scale(2)" d="M18 2h-8L4.02 8 4 20c0 1.1.9 2 2 2h12c1.1 0 2-.9 2-2V4c0-1.1-.9-2-2-2zm-5 15h-2v-2h2v2zm0-4h-2V8h2v5z"/>
<path transform="translate(694 524) scale(2)" d="M20 2H4c-1.1 0-1.99.9-1.99 2L2 22l4-4h14c1.1 0 2-.9 2-2V4c0-1.1-.9-2-2-2zm-7 12h-2v-2h2v2zm0-4h-2V6h2v4z"/>
<path transform="translate(758 524) scale(2)" d="M20 2H4c-1.1 0-1.99.9-1.99 2L2 22l4-4h14c1.1 0 2-.9 2-2V4c0-1.1-.9-2-2-2zM9 11H7V9h2v2zm4 0h-2V9h2v2zm4 0h-2V9h2v2z"/>
<path transform="translate(822 524) scale(2)" d="M10 6.35V4.26c-.8.21-1.55.54-2.23.96l1.46 1.46c.25-.12.5-.24.77-.33zm-7.14-.94l2.36 2.36C4.45 8.99 4 10.44 4 12c0 2.21.91 4.2 2.36 5.64L4 20h6v-6l-2.24 2.24C6.68 15.15 6 13.66 6 12c0-1 .25-1.94.68-2.77l8.08 8.08c-.25.13-.5.25-.77.34v2.09c.8-.21 1.55-.54 2.23-.96l2.36 2.36 1.27-1.27L4.14 4.14 2.86 5.41zM20 4h-6v6l2.24-2.24C17.32 8.85 18 10.34 18 12c0 1-.25 1.94-.68 2.77l1.46 1.46C19.55 15.01 20 13.56 20 12c0-2.21-.91-4.2-2.36-5.64L20 4z"/>
<path transform="translate(886 524) scale(2)" d="M3 12c0 2.21.91 4.2 2.36 5.64L3 20h6v-6l-2.24 2.24C5.68 15.15 5 13.66 5 12c0-2.61 1.67-4.83 4-5.65V4.26C5.55 5.15 3 8.27 3 12zm8 5h2v-2h-2v2zM21 4h-6v6l2.24-2.24C18.32 8.85 19 10.34 19 12c0 2.61-1.67 4.83-4 5.65v2.09c3.45-.89 6-4.01 6-7.74 0-2.21-.91-4.2-2.36-5.64L21 4zm-10 9h2V7h-2v6z"/>
<path transform="translate(950 524) scale(2)" d="M12 4V1L8 5l4 4V6c3.31 0 6 2.69 6 6 0 1.01-.25 1.97-.7 2.8l1.46 1.46C19.54 15.03 20 13.57 20 12c0-4.42-3.58-8-8-8zm0 14c-3.31 0-6-2.69-6-6 0-1.01.25-1.97.7-2.8L5.24 7.74C4.46 8.97 4 10.43 4 12c0 4.42 3.58 8 8 8v3l4-4-4-4v3z"/>
<path transform="translate(1014 524) scale(2)" d="M17.01 1.01L7 1c-1.1 0-2 .9-2 2v18c0 1.1.9 2 2 2h10c1.1 0 2-.9 2-2V3c0-1.1-.9-1.99-1.99-1.99zM17 19H7V5h10v14zm-1-6h-3V8h-2v5H8l4 4 4-4z"/>
<!-- row 9 -->
<path transform="translate(310 588) scale(2)" d="M2 16v2c2.76 0 5 2.24 5 5h2c0-3.87-3.13-7-7-7zm0 4v3h3c0-1.66-1.34-3-3-3zm0-8v2c4.97 0 9 4.03 9 9h2c0-6.08-4.93-11-11-11zM17 1.01L7 1c-1.1 0-2 .9-2 2v7.37c.69.16 1.36.37 2 .64V5h10v13h-3.03c.52 1.25.84 2.59.95 4H17c1.1 0 2-.9 2-2V3c0-1.1-.9-1.99-2-1.99z"/>
<use href="#car" transform="translate(374 588) scale(2)"/>
<path transform="translate(438 588) scale(2)" d="M0 15h2V9H0v6zm3 2h2V7H3v10zm19-8v6h2V9h-2zm-3 8h2V7h-2v10zM16.5 3h-9C6.67 3 6 3.67 6 4.5v15c0 .83.67 1.5 1.5 1.5h9c.83 0 1.5-.67 1.5-1.5v-15c0-.83-.67-1.5-1.5-1.5zM16 19H8V5h8v14z"/>
<path transform="translate(502 588) scale(2)" d="M20 2H4c-1.1 0-1.99.9-1.99 2L2 22l4-4h14c1.1 0 2-.9 2-2V4c0-1.1-.9-2-2-2zm-2 12l-4-3.2V14H6V6h8v3.2L18 6v8z"/>
<path transform="translate(566 588) scale(2)" d="M22 4v-.5C22 2.12 20.88 1 19.5 1S17 2.12 17 3.5V4c-.55 0-1 .45-1 1v4c0 .55.45 1 1 1h5c.55 0 1-.45 1-1V5c0-.55-.45-1-1-1zm-.8 0h-3.4v-.5c0-.94.76-1.7 1.7-1.7s1.7.76 1.7 1.7V4zm-2.28 8c.04.33.08.66.08 1 0 2.08-.8 3.97-2.1 5.39-.26-.81-1-1.39-1.9-1.39h-1v-3c0-.55-.45-1-1-1H7v-2h2c.55 0 1-.45 1-1V8h2c1.1 0 2-.9 2-2V3.46c-.95-.3-1.95-.46-3-.46C5.48 3 1 7.48 1 13s4.48 10 10 10 10-4.48 10-10c0-.34-.02-.67-.05-1h-2.03zM10 20.93c-3.95-.49-7-3.85-7-7.93 0-.62.08-1.21.21-1.79L8 16v1c0 1.1.9 2 2 2v1.93z"/>
<path transform="translate(630 588) scale(2)" d="M12 6c1.11 0 2-.9 2-2 0-.38-.1-.73-.29-1.03L12 0l-1.71 2.97c-.19.3-.29.65-.29 1.03 0 1.1.9 2 2 2zm4.6 9.99l-1.07-1.07-1.08 1.07c-1.3 1.3-3.58 1.31-4.89 0l-1.07-1.07-1.09 1.07C6.75 16.64 5.88 17 4.96 17c-.73 0-1.4-.23-1.96-.61V21c0 .55.45 1 1 1h16c.55 0 1-.45 1-1v-4.61c-.56.38-1.23.61-1.96.61-.92 0-1.79-.36-2.44-1.01zM18 9h-5V7h-2v2H6c-1.66 0-3 1.34-3 3v1.54c0 1.08.88 1.96 1.96 1.96.52 0 1.02-.2 1.38-.57l2.14-2.13 2.13 2.13c.74.74 2.03.74 2.77 0l2.14-2.13 2.13 2.13c.37.37.86.57 1.38.57 1.08 0 1.96-.88 1.96-1.96V12C21 10.34 19.66 9 18 9z"/>
<path transform="translate(694 588) scale(2)" d="M12 7V3H2v18h20V7H12zM6 19H4v-2h2v2zm0-4H4v-2h2v2zm0-4H4V9h2v2zm0-4H4V5h2v2zm4 12H8v-2h2v2zm0-4H8v-2h2v2zm0-4H8V9h2v2zm0-4H8V5h2v2zm10 12h-8v-2h2v-2h-2v-2h2v-2h-2V9h8v10zm-2-8h-2v2h2v-2zm0 4h-2v2h2v-2z"/>
<path transform="translate(758 588) scale(2)" d="M8 10H5V7H3v3H0v2h3v3h2v-3h3v-2zm10 1c1.66 0 2.99-1.34 2.99-3S19.66 5 18 5c-.32 0-.63.05-.91.14.57.81.9 1.79.9 2.86s-.34 2.04-.9 2.86c.28.09.59.14.91.14zm-5 0c1.66 0 2.99-1.34 2.99-3S14.66 5 13 5s-3 1.34-3 3 1.34 3 3 3zm6.62 2.16c.83.73 1.38 1.66 1.38 2.84v2h3v-2c0-1.54-2.37-2.49-4.38-2.84zM13 13c-2 0-6 1-6 3v2h12v-2c0-2-4-3-6-3z"/>
<use href="#group" transform="translate(822 588) scale(2)"/>
<path transform="translate(886 588) scale(2)" d="M15 11V5l-3-3-3 3v2H3v14h18V11h-6zm-8 8H5v-2h2v2zm0-4H5v-2h2v2zm0-4H5V9h2v2zm6 8h-2v-2h2v2zm0-4h-2v-2h2v2zm0-4h-2V9h2v2zm0-4h-2V5h2v2zm6 12h-2v-2h2v2zm0-4h-2v-2h2v2z"/>
<path transform="translate(950 588) scale(2)" d="M11.99 2C6.47 2 2 6.48 2 12s4.47 10 9.99 10C17.52 22 22 17.52 22 12S17.52 2 11.99 2zM12 20c-4.42 0-8-3.58-8-8s3.58-8 8-8 8 3.58 8 8-3.58 8-8 8zm3.5-9c.83 0 1.5-.67 1.5-1.5S16.33 8 15.5 8 14 8.67 14 9.5s.67 1.5 1.5 1.5zm-7 0c.83 0 1.5-.67 1.5-1.5S9.33 8 8.5 8 7 8.67 7 9.5 7.67 11 8.5 11zm3.5 6.5c2.33 0 4.31-1.46 5.11-3.5H6.89c.8 2.04 2.78 3.5 5.11 3.5z"/>
<path transform="translate(1014 588) scale(2)" d="M11.5 22c1.1 0 2-.9 2-2h-4c0 1.1.9 2 2 2zm6.5-6v-5.5c0-3.07-2.13-5.64-5-6.32V3.5c0-.83-.67-1.5-1.5-1.5S10 2.67 10 3.5v.68c-2.87.68-5 3.25-5 6.32V16l-2 2v1h17v-1l-2-2zm-2 1H7v-6.5C7 8.01 9.01 6 11.5 6S16 8.01 16 10.5V17z"/>
<!-- row 10 -->
<path transform="translate(310 652) scale(2)" d="M11.5 22c1.1 0 2-.9 2-2h-4c0 1.1.9 2 2 2zM18 10.5c0-3.08-2.13-5.64-5-6.32V3.5c0-.83-.67-1.5-1.5-1.5S10 2.67 10 3.5v.68c-.51.12-.99.32-1.45.56L18 14.18V10.5zm-.27 8.5l2 2L21 19.73 4.27 3 3 4.27l2.92 2.92C5.34 8.16 5 9.29 5 10.5V16l-2 2v1h14.73z"/>
<path transform="translate(374 652) scale(2)" d="M6.58 3.58L5.15 2.15C2.76 3.97 1.18 6.8 1.03 10h2c.15-2.65 1.51-4.97 3.55-6.42zM19.97 10h2c-.15-3.2-1.73-6.03-4.13-7.85l-1.43 1.43c2.05 1.45 3.41 3.77 3.56 6.42zm-1.97.5c0-3.07-2.13-5.64-5-6.32V3.5c0-.83-.67-1.5-1.5-1.5S10 2.67 10 3.5v.68c-2.87.68-5 3.25-5 6.32V16l-2 2v1h17v-1l-2-2v-5.5zM11.5 22c.14 0 .27-.01.4-.04.65-.14 1.18-.58 1.44-1.18.1-.24.16-.5.16-.78h-4c0 1.1.9 2 2 2z"/>
<path transform="translate(438 652) scale(2)" d="M11.5 22c1.1 0 2-.9 2-2h-4c0 1.1.9 2 2 2zm6.5-6v-5.5c0-3.07-2.13-5.64-5-6.32V3.5c0-.83-.67-1.5-1.5-1.5S10 2.67 10 3.5v.68c-2.87.68-5 3.25-5 6.32V16l-2 2v1h17v-1l-2-2zm-4-6.2l-2.8 3.4H14V15H9v-1.8l2.8-3.4H9V8h5v1.8z"/>
<path transform="translate(502 652) scale(2)" d="M11.5 22c1.1 0 2-.9 2-2h-4c0 1.1.9 2 2 2zm6.5-6v-5.5c0-3.07-2.13-5.64-5-6.32V3.5c0-.83-.67-1.5-1.5-1.5S10 2.67 10 3.5v.68c-2.87.68-5 3.25-5 6.32V16l-2 2v1h17v-1l-2-2z"/>
<path transform="translate(566 652) scale(2)" d="M3 5v6h5L7 7l4 1V3H5c-1.1 0-2 .9-2 2zm5 8H3v6c0 1.1.9 2 2 2h6v-5l-4 1 1-4zm9 4l-4-1v5h6c1.1 0 2-.9 2-2v-6h-5l1 4zm2-14h-6v5l4-1-1 4h5V5c0-1.1-.9-2-2-2z"/>
<path transform="translate(630 652) scale(2)" d="M20 4h-3.17L15 2H9L7.17 4H4c-1.1 0-2 .9-2 2v12c0 1.1.9 2 2 2h16c1.1 0 2-.9 2-2V6c0-1.1-.9-2-2-2zm-8 3c1.63 0 3.06.79 3.98 2H12c-1.66 0-3 1.34-3 3 0 .35.07.69.18 1H7.1c-.06-.32-.1-.66-.1-1 0-2.76 2.24-5 5-5zm0 10c-1.63 0-3.06-.79-3.98-2H12c1.66 0 3-1.34 3-3 0-.35-.07-.69-.18-1h2.08c.07.32.1.66.1 1 0 2.76-2.24 5-5 5z"/>
<path transform="translate(694 652) scale(2)" d="M16.5 13c-1.2 0-3.07.34-4.5 1-1.43-.67-3.3-1-4.5-1C5.33 13 1 14.08 1 16.25V19h22v-2.75c0-2.17-4.33-3.25-6.5-3.25zm-4 4.5h-10v-1.25c0-.54 2.56-1.75 5-1.75s5 1.21 5 1.75v1.25zm9 0H14v-1.25c0-.46-.2-.86-.52-1.22.88-.3 1.96-.53 3.02-.53 2.44 0 5 1.21 5 1.75v1.25zM7.5 12c1.93 0 3.5-1.57 3.5-3.5S9.43 5 7.5 5 4 6.57 4 8.5 5.57 12 7.5 12zm0-5.5c1.1 0 2 .9 2 2s-.9 2-2 2-2-.9-2-2 .9-2 2-2zm9 5.5c1.93 0 3.5-1.57 3.5-3.5S18.43 5 16.5 5 13 6.57 13 8.5s1.57 3.5 3.5 3.5zm0-5.5c1.1 0 2 .9 2 2s-.9 2-2 2-2-.9-2-2 .9-2 2-2z"/>
<use href="#group" transform="translate(758 652) scale(2)"/>
<path transform="translate(822 652) scale(2)" d="M15 12c2.21 0 4-1.79 4-4s-1.79-4-4-4-4 1.79-4 4 1.79 4 4 4zm-9-2V7H4v3H1v2h3v3h2v-3h3v-2H6zm9 4c-2.67 0-8 1.34-8 4v2h16v-2c0-2.66-5.33-4-8-4z"/>
<path transform="translate(886 652) scale(2)" d="M12 5.9c1.16 0 2.1.94 2.1 2.1s-.94 2.1-2.1 2.1S9.9 9.16 9.9 8s.94-2.1 2.1-2.1m0 9c2.97 0 6.1 1.46 6.1 2.1v1.1H5.9V17c0-.64 3.13-2.1 6.1-2.1M12 4C9.79 4 8 5.79 8 8s1.79 4 4 4 4-1.79 4-4-1.79-4-4-4zm0 9c-2.67 0-8 1.34-8 4v3h16v-3c0-2.66-5.33-4-8-4z"/>
<path transform="translate(950 652) scale(2)" d="M12 12c2.21 0 4-1.79 4-4s-1.79-4-4-4-4 1.79-4 4 1.79 4 4 4zm0 2c-2.67 0-8 1.34-8 4v2h16v-2c0-2.66-5.33-4-8-4z"/>
<path transform="translate(1014 652) scale(2)" d="M10 8H8v4H4v2h4v4h2v-4h4v-2h-4zm4.5-1.92V7.9l2.5-.5V18h2V5z"/>
<!-- row 11 -->
<path transform="translate(310 716) scale(2)" d="M19 3H5c-1.1 0-2 .9-2 2v14c0 1.1.9 2 2 2h14c1.1 0 2-.9 2-2V5c0-1.1-.9-2-2-2zM9 17H7v-7h2v7zm4 0h-2V7h2v10zm4 0h-2v-4h2v4z"/>
<path transform="translate(374 716) scale(2)" d="M12 2C6.48 2 2 6.48 2 12s4.48 10 10 10 10-4.48 10-10S17.52 2 12 2zm-1 17.93c-3.95-.49-7-3.85-7-7.93 0-.62.08-1.21.21-1.79L9 15v1c0 1.1.9 2 2 2v1.93zm6.9-2.54c-.26-.81-1-1.39-1.9-1.39h-1v-3c0-.55-.45-1-1-1H8v-2h2c.55 0 1-.45 1-1V7h2c1.1 0 2-.9 2-2v-.41c2.93 1.19 5 4.06 5 7.41 0 2.08-.8 3.97-2.1 5.39z"/>
<path transform="translate(438 716) scale(2)" d="M5 13.18v4L12 21l7-3.82v-4L12 17l-7-3.82zM12 3L1 9l11 6 9-4.91V17h2V9L12 3z"/>
<path transform="translate(502 716) scale(2)" d="M18 16.08c-.76 0-1.44.3-1.96.77L8.91 12.7c.05-.23.09-.46.09-.7s-.04-.47-.09-.7l7.05-4.11c.54.5 1.25.81 2.04.81 1.66 0 3-1.34 3-3s-1.34-3-3-3-3 1.34-3 3c0 .24.04.47.09.7L8.04 9.81C7.5 9.31 6.79 9 6 9c-1.66 0-3 1.34-3 3s1.34 3 3 3c.79 0 1.5-.31 2.04-.81l7.12 4.16c-.05.21-.08.43-.08.65 0 1.61 1.31 2.92 2.92 2.92 1.61 0 2.92-1.31 2.92-2.92s-1.31-2.92-2.92-2.92z"/>
<path transform="translate(566 716) scale(2)" d="M13.5.67s.74 2.65.74 4.8c0 2.06-1.35 3.73-3.41 3.73-2.07 0-3.63-1.67-3.63-3.73l.03-.36C5.21 7.51 4 10.62 4 14c0 4.42 3.58 8 8 8s8-3.58 8-8C20 8.61 17.41 3.8 13.5.67zM11.71 19c-1.78 0-3.22-1.4-3.22-3.14 0-1.62 1.05-2.76 2.81-3.12 1.77-.36 3.6-1.21 4.62-2.58.39 1.29.59 2.65.59 4.04 0 2.65-2.15 4.8-4.8 4.8z"/>
<path transform="translate(630 716) scale(2)" d="M19 5v14H5V5h14m0-2H5c-1.1 0-2 .9-2 2v14c0 1.1.9 2 2 2h14c1.1 0 2-.9 2-2V5c0-1.1-.9-2-2-2z"/>
<path transform="translate(694 716) scale(2)" d="M19 3H5c-1.11 0-2 .9-2 2v14c0 1.1.89 2 2 2h14c1.11 0 2-.9 2-2V5c0-1.1-.89-2-2-2zm-9 14l-5-5 1.41-1.41L10 14.17l7.59-7.59L19 8l-9 9z"/>
<path transform="translate(758 716) scale(2)" d="M12 2C6.48 2 2 6.48 2 12s4.48 10 10 10 10-4.48 10-10S17.52 2 12 2zm0 18c-4.42 0-8-3.58-8-8s3.58-8 8-8 8 3.58 8 8-3.58 8-8 8z"/>
<path transform="translate(822 716) scale(2)" d="M12 7c-2.76 0-5 2.24-5 5s2.24 5 5 5 5-2.24 5-5-2.24-5-5-5zm0-5C6.48 2 2 6.48 2 12s4.48 10 10 10 10-4.48 10-10S17.52 2 12 2zm0 18c-4.42 0-8-3.58-8-8s3.58-8 8-8 8 3.58 8 8-3.58 8-8 8z"/>
<path transform="translate(886 716) scale(2)" d="M22 9.74l-7.19-.62L12 2.5 9.19 9.13 2 9.74l5.46 4.73-1.64 7.03L12 17.77l6.18 3.73-1.63-7.03L22 9.74zM12 15.9V6.6l1.71 4.04 4.38.38-3.32 2.88 1 4.28L12 15.9z"/>
<path transform="translate(950 716) scale(2)" d="M22 9.74l-7.19-.62L12 2.5 9.19 9.13 2 9.74l5.46 4.73-1.64 7.03L12 17.77l6.18 3.73-1.63-7.03L22 9.74zM12 15.9l-3.76 2.27 1-4.28-3.32-2.88 4.38-.38L12 6.6l1.71 4.04 4.38.38-3.32 2.88 1 4.28L12 15.9z"/>
<path transform="translate(1014 716) scale(2)" d="M12 17.77l6.18 3.73-1.63-7.03L22 9.74l-7.19-.62L12 2.5 9.19 9.13 2 9.74l5.46 4.73-1.64 7.03z"/>
</g>
</svg>
</body>
</html>
